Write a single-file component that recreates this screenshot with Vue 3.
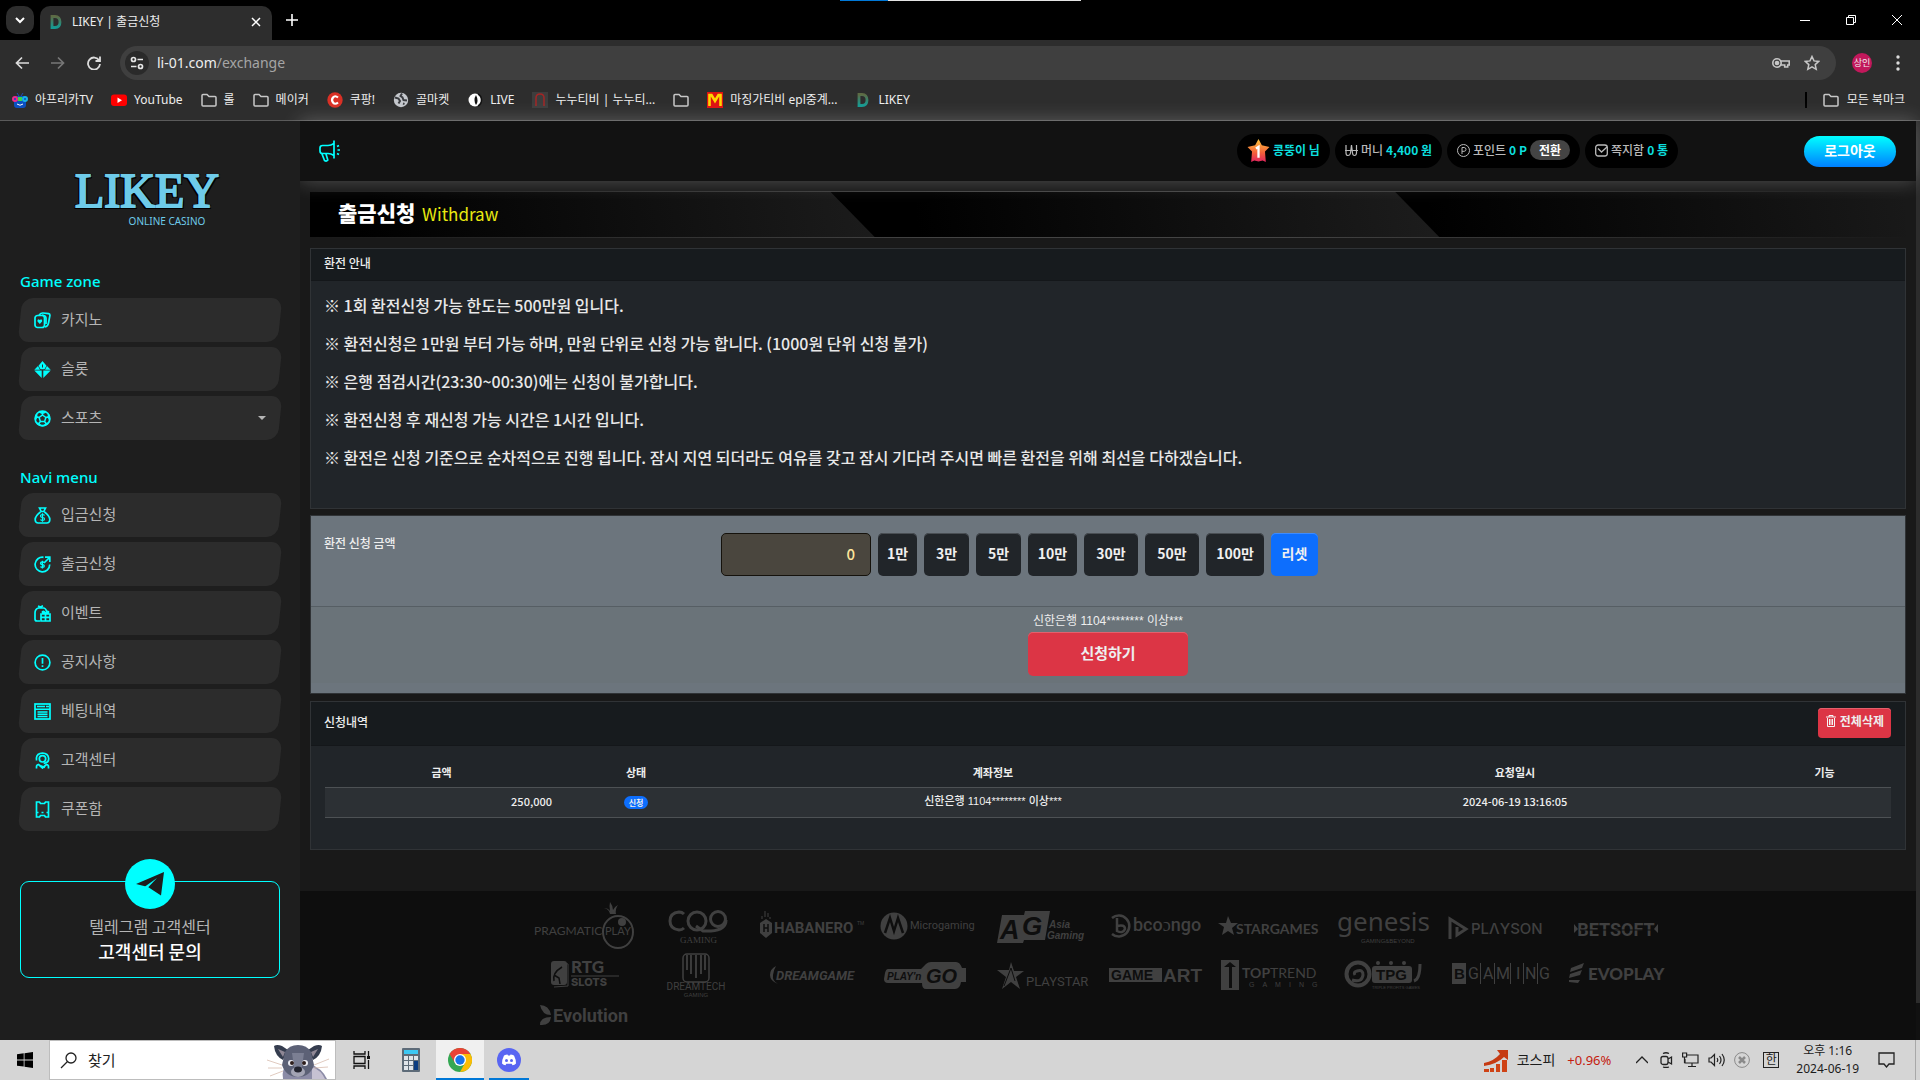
<script setup>
import { ref } from 'vue'

const amount = ref('0')

const bookmarks = [
  { label: '아프리카TV', icon: 'afreeca' },
  { label: 'YouTube', icon: 'youtube' },
  { label: '롤', icon: 'folder' },
  { label: '메이커', icon: 'folder' },
  { label: '쿠팡!', icon: 'coupang' },
  { label: '골마켓', icon: 'globe' },
  { label: 'LIVE', icon: 'live' },
  { label: '누누티비 | 누누티...', icon: 'nunu' },
  { label: '', icon: 'folder' },
  { label: '마징가티비 epl중계...', icon: 'mazinga' },
  { label: 'LIKEY', icon: 'likey' },
]

const bookmarkIcons = {
  afreeca: '<path d="M5 1l2 3M11 1L9 4" stroke="#1d4fb8" stroke-width="1"/><rect x="2" y="4" width="12" height="12" rx="3" fill="#0b4fc0"/><circle cx="3" cy="7" r="2" fill="none" stroke="#ef2a8a" stroke-width="2"/><circle cx="13" cy="7" r="2" fill="none" stroke="#18b4e8" stroke-width="2"/><rect x="6" y="5" width="4" height="4" fill="#3bd44a"/><path d="M5 12q3 2.500 6 0" fill="none" stroke="#fff"/>',
  youtube: '<rect x="0" y="2.500" width="16" height="11.500" rx="3" fill="#f00"/><path d="M6.500 5.500v5.500l4.500-2.750z" fill="#fff"/>',
  folder: '<path d="M1 12.500V3.500q0-1 1-1h4l2 2h6q1 0 1 1v7.500q0 1-1 1H2q-1 0-1-1z" fill="none" stroke="#c7c7c7" stroke-width="1.500"/>',
  coupang: '<circle cx="8" cy="8" r="7.700" fill="#d93025"/><path d="M11 5.500q-3-2.500-5 0t0 5q2 2.500 5 0" fill="none" stroke="#fff" stroke-width="2.200"/>',
  globe: '<circle cx="8" cy="8" r="7.200" fill="#c4c7cc"/><path d="M2 5.500l3.500 1L7 9l-1.500 2.500M9 1.500L7.500 4l2 1.500 1 2.500 3.500.5M10 11.500l1.500.5" fill="none" stroke="#3a3c40" stroke-width="2"/>',
  live: '<circle cx="8" cy="8" r="6.500" fill="#fff"/><path d="M9 3q-3 5 0 10 3-4 0-10z" fill="#111"/><path d="M11 2q3.500 2 3.500 6t-3.500 6" fill="none" stroke="#111" stroke-width="1.500"/>',
  nunu: '<rect width="16" height="16" fill="#3d3d3d"/><path d="M4 14V6q0-4 4-4t4 4v8" fill="none" stroke="#a32626" stroke-width="1.500"/>',
  mazinga: '<rect width="16" height="16" fill="#d11"/><path d="M2.500 14V3h2L8 9l3.500-6h2v11" fill="none" stroke="#ffd500" stroke-width="2.600"/>',
  likey: '<path d="M4 2.500v11h3q5 0 5-5.500t-5-5.500z" fill="none" stroke="url(#dg)" stroke-width="2.800"/>',
}

const gameMenu = [
  { label: '카지노', icon: 'cards' },
  { label: '슬롯', icon: 'gem' },
  { label: '스포츠', icon: 'ball', caret: true },
]

const naviMenu = [
  { label: '입금신청', icon: 'moneybag' },
  { label: '출금신청', icon: 'cashout' },
  { label: '이벤트', icon: 'event' },
  { label: '공지사항', icon: 'notice' },
  { label: '베팅내역', icon: 'history' },
  { label: '고객센터', icon: 'support' },
  { label: '쿠폰함', icon: 'coupon' },
]

const menuIcons = {
  cards: '<rect x="1" y="3.500" width="9.500" height="12" rx="2.500"/><path d="M5 3Q7 .8 9 1l5.500.7q1.700.4 1.400 2L14.500 11q-.5 3.500-3.500 4M8 3q4 .5 4 3v6"/><path d="M5.800 12L3.500 9.500q-.5-2 1-2.300l1.300.8 1.300-.8q1.500.3 1 2.300z" fill="#0ff" stroke="none"/>',
  gem: '<path d="M8.500 0l4 4.700-2 3.500h-4l-2-3.500zM4 5l2 3.800H.3zM13 5l3.700 3.800H11zM.3 9.600h7.400V17zM16.700 9.600H9.300V17z" fill="#0ff" stroke="none"/><path d="M8.500 3.500v3" stroke="#2c2c2c" stroke-width="1"/>',
  ball: '<circle cx="8.500" cy="8.500" r="7.400"/><path d="M8.500 5l3.400 2.500-1.300 4H6.400l-1.300-4zM8.500 1v4M12 7.500l4-1.300M10.500 11.500l2.800 3.500M6.400 11.500L3.700 15M5 7.500L1.200 6.200M5.500 2L8.500 3.500l3-1.500M14.500 4v3.500l1.200 2.500M14 13l-4 2.500H7L3 13M1.300 10l1.300-2.500V4" stroke-width="1.500"/>',
  moneybag: '<path d="M5.500 1h6l-1.700 3.500H7.200zM6.500 5Q1 9 1.200 13q.3 3 3 3h8.600q2.700 0 3-3Q16 9 10.500 5"/><path d="M10.500 8.500q-.5-1-2-1-2 0-2 1.500t2 1.500 2 1.500-2 1.500q-1.500 0-2-1M8.500 6.200v8.600" stroke-width="1.200"/>',
  cashout: '<path d="M9.500 1.300a7.300 7.300 0 1 0 6.200 7.200M10 7l5.500-5.500M11 1.200h4.800V6"/><path d="M10.300 6.800q-.4-1-1.900-1-1.900 0-1.900 1.400t1.900 1.400 1.900 1.400-1.900 1.400q-1.500 0-1.900-1M8.400 4.700v7.900" stroke-width="1.300"/>',
  event: '<path d="M6 16H3q-2 0-2-2V8q0-4 3.500-5h5q2 0 3 3M4 1l2.500 1L9 .8M7 9h9v7H7zM7 12.300h9M11.500 9v7M11.500 9q-3.500-.8-3-2.300 1.800-1.200 3 2.300 1.200-3.500 3-2.300.5 1.500-3 2.300"/>',
  notice: '<circle cx="8.500" cy="8.500" r="7.400"/><path d="M8.500 4v5.800M8.500 11.200v1.700"/>',
  history: '<rect x="1" y="1" width="15" height="15"/><path d="M1 6.200h15M3 3.600h8M12 3.500h3M3.500 9h10M3.500 11.300h10M3.500 13.500h10" stroke-width="1.500"/>',
  support: '<path d="M2.300 6.500q.5-5.300 6.200-5.300t6.200 5.300q0 4.500-5 4.800M2.500 8.500V6"/><circle cx="8.500" cy="6.800" r="3.200"/><path d="M2.500 16.500v-1.800q0-2 2-2.200l4 3.500 4-3.500q2 .2 2 2.200v1.800M6 13.500l5 2"/>',
  coupon: '<path d="M2.500 1h3l1 1.500h4l1-1.500h3v15h-3l-1-1.500h-4l-1 1.500h-3zM2.500 11.500h2M7.500 11.500h2M12.500 11.500h2"/>',
}

const presets = ['1만', '3만', '5만', '10만', '30만', '50만', '100만']

const notices = [
  '※ 1회 환전신청 가능 한도는 500만원 입니다.',
  '※ 환전신청은 1만원 부터 가능 하며, 만원 단위로 신청 가능 합니다. (1000원 단위 신청 불가)',
  '※ 은행 점검시간(23:30~00:30)에는 신청이 불가합니다.',
  '※ 환전신청 후 재신청 가능 시간은 1시간 입니다.',
  '※ 환전은 신청 기준으로 순차적으로 진행 됩니다. 잠시 지연 되더라도 여유를 갖고 잠시 기다려 주시면 빠른 환전을 위해 최선을 다하겠습니다.',
]

const requests = [
  { amount: '250,000', status: '신청', account: '신한은행 1104******** 이상***', time: '2024-06-19 13:16:05' },
]
</script>

<template>
  <div class="desktop">
    <svg class="defs" width="0" height="0" aria-hidden="true">
      <defs>
        <linearGradient id="dg" x1="0" y1="0" x2="0" y2="1">
          <stop offset="0" stop-color="#5d6b45" />
          <stop offset="1" stop-color="#159a92" />
        </linearGradient>
      </defs>
    </svg>

    <header class="browser">
      <div class="load-line"></div>
      <div class="tabs">
        <button class="tab-search" aria-label="탭 검색">
          <svg width="10" height="10" viewBox="0 0 10 10" fill="none" stroke="#fff" stroke-width="2"><path d="M1 3l4 4 4-4" /></svg>
        </button>
        <div class="tab">
          <svg width="16" height="16" viewBox="0 0 16 16" v-html="bookmarkIcons.likey"></svg>
          <span class="tab-title">LIKEY | 출금신청</span>
          <button class="bare" aria-label="탭 닫기">
            <svg width="10" height="10" viewBox="0 0 10 10" stroke="#fff" stroke-width="1.500"><path d="M1 1l8 8M9 1L1 9" /></svg>
          </button>
        </div>
        <button class="bare new-tab" aria-label="새 탭">
          <svg width="12" height="12" viewBox="0 0 12 12" stroke="#fff" stroke-width="1.600"><path d="M6 0v12M0 6h12" /></svg>
        </button>
        <div class="window-buttons">
          <button class="bare" aria-label="최소화"><svg width="10" height="10" viewBox="0 0 10 10" stroke="#fff"><path d="M0 5.500h10" /></svg></button>
          <button class="bare" aria-label="이전 크기로"><svg width="10" height="10" viewBox="0 0 10 10" fill="none" stroke="#fff"><path d="M.5 2.500h7v7h-7zM2.500 2.500v-2h7v7h-2" /></svg></button>
          <button class="bare" aria-label="닫기"><svg width="10" height="10" viewBox="0 0 10 10" stroke="#fff"><path d="M0 0l10 10M10 0L0 10" /></svg></button>
        </div>
      </div>

      <div class="toolbar">
        <button class="bare" aria-label="뒤로"><svg width="14" height="14" viewBox="0 0 14 14" fill="none" stroke="#dcdcdc" stroke-width="1.700"><path d="M14 7H2M7 1.500L1.500 7 7 12.500" /></svg></button>
        <button class="bare" aria-label="앞으로"><svg width="14" height="14" viewBox="0 0 14 14" fill="none" stroke="#777" stroke-width="1.700"><path d="M0 7h12M7 1.500L12.500 7 7 12.500" /></svg></button>
        <button class="bare" aria-label="새로고침"><svg width="14" height="14" viewBox="0 0 14 14" fill="none" stroke="#dcdcdc" stroke-width="1.800"><path d="M12.200 4.500A6 6 0 1 0 13 8M13 .5V5H8.500" /></svg></button>
        <div class="address">
          <span class="site-info">
            <svg width="14" height="14" viewBox="0 0 14 14" fill="none" stroke="#e6e6e6" stroke-width="1.700"><circle cx="3.500" cy="3.500" r="2" /><path d="M7.500 3.500H13M1 10.500h5.500" /><circle cx="10.500" cy="10.500" r="2" /></svg>
          </span>
          <span class="url">li-01.com<span class="path">/exchange</span></span>
          <svg width="18" height="12" viewBox="0 0 18 12" fill="none" stroke="#c7c7c7" stroke-width="1.600"><circle cx="5" cy="6" r="4.200" /><circle cx="5" cy="6" r="1.500" fill="#c7c7c7" /><path d="M9 4h8.200v4h-1.500v2h-3V8H9" /></svg>
          <svg width="16" height="16" viewBox="0 0 16 16" fill="none" stroke="#c7c7c7" stroke-width="1.500"><path d="M8 1.500l2 4.400 4.800.5-3.600 3.200 1 4.700L8 11.900l-4.200 2.400 1-4.700L1.200 6.400 6 5.900z" /></svg>
        </div>
        <span class="avatar">상인</span>
        <button class="bare menu-dots" aria-label="메뉴"><svg width="4" height="16" viewBox="0 0 4 16" fill="#dcdcdc"><circle cx="2" cy="2" r="1.700" /><circle cx="2" cy="8" r="1.700" /><circle cx="2" cy="14" r="1.700" /></svg></button>
      </div>

      <nav class="bookmarks" aria-label="북마크">
        <a v-for="(b, i) in bookmarks" :key="i" href="#" class="bookmark">
          <svg width="16" height="16" viewBox="0 0 16 16" v-html="bookmarkIcons[b.icon]"></svg>
          <span v-if="b.label">{{ b.label }}</span>
        </a>
        <a href="#" class="bookmark all-bookmarks">
          <svg width="16" height="16" viewBox="0 0 16 16" v-html="bookmarkIcons.folder"></svg>
          <span>모든 북마크</span>
        </a>
      </nav>
    </header>

    <div class="site">
      <aside class="sidebar">
        <div class="brand">
          <div class="brand-name">LIKEY</div>
          <div class="brand-sub">ONLINE CASINO</div>
        </div>

        <h2 class="menu-title">Game zone</h2>
        <nav class="menu">
          <a v-for="m in gameMenu" :key="m.label" href="#" class="menu-item">
            <svg width="17" height="17" viewBox="0 0 17 17" class="menu-icon" v-html="menuIcons[m.icon]"></svg>
            <span>{{ m.label }}</span>
            <svg v-if="m.caret" class="caret" width="8" height="4" viewBox="0 0 8 4"><path d="M0 0h8L4 4z" fill="#b5b5b5" /></svg>
          </a>
        </nav>

        <h2 class="menu-title second">Navi menu</h2>
        <nav class="menu">
          <a v-for="m in naviMenu" :key="m.label" href="#" class="menu-item">
            <svg width="17" height="17" viewBox="0 0 17 17" class="menu-icon" v-html="menuIcons[m.icon]"></svg>
            <span>{{ m.label }}</span>
          </a>
        </nav>

        <a href="#" class="telegram">
          <span class="telegram-badge">
            <svg width="28" height="24" viewBox="0 0 28 24"><path d="M0 12L28 0l-3 23.500-13-8.500z" fill="#1e1e1e" /><path d="M21 6L9 14.500l3 4.500v-3.500z" fill="#0ff" /></svg>
          </span>
          <span class="telegram-sub">텔레그램 고객센터</span>
          <strong class="telegram-main">고객센터 문의</strong>
        </a>
      </aside>

      <main class="main">
        <header class="topbar">
          <svg class="horn" width="22" height="22" viewBox="0 0 22 22" fill="none" stroke="#0ff" stroke-width="1.700"><path d="M15 .5v18M15 3.500q-3 2-6 2H3.500Q1 5.500 1 8v3q0 2.500 2.500 2.500H9q3 0 6 2M3 14l2.500 6.500q2 1.300 3.300-.5L7 14" /><path d="M18 6.500l2-1M18.500 10H21M18 13.500l2 1" /></svg>
          <div class="pills">
            <span class="pill">
              <svg width="23" height="23" viewBox="0 0 22 22"><defs><linearGradient id="sg" x1="0" y1="0" x2="0" y2="1"><stop offset="0" stop-color="#ffc83d" /><stop offset=".6" stop-color="#f4603a" /><stop offset="1" stop-color="#e0245e" /></linearGradient></defs><path d="M11 0l3.200 6 7.300 1.600-4.300 4.400.8 10-3-1.500-4 1-4-1L4 22l.8-10L.5 7.600 7.800 6z" fill="url(#sg)" /><path d="M8.500 9L11 7.500V18" fill="none" stroke="#fff" stroke-width="2.200" /></svg>
              <b>콩뚱이 님</b>
            </span>
            <span class="pill">
              <svg width="13" height="13" viewBox="0 0 13 13" fill="none" stroke="#b9b9b9" stroke-width="1.200"><path d="M1 1v8q0 2.500 2 2.500T5.500 9l1-8 1 8q.2 2.500 2 2.500t2-2.500V1M0 6.500h13" /></svg>
              <span>머니</span> <b>4,400 원</b>
            </span>
            <span class="pill">
              <svg width="13" height="13" viewBox="0 0 13 13" fill="none" stroke="#b9b9b9"><circle cx="6.500" cy="6.500" r="6" /><path d="M5 10V3.500h2.200q1.800.2 1.800 1.900T7.200 7.300H5" /></svg>
              <span>포인트</span> <b>0 P</b>
              <button class="convert">전환</button>
            </span>
            <span class="pill">
              <svg width="13" height="13" viewBox="0 0 13 13" fill="none" stroke="#b9b9b9" stroke-width="1.300"><rect x=".7" y="1" width="11.600" height="11" rx="2.500" /><path d="M3 4.500l3.500 3.500L12 3" /></svg>
              <span>쪽지함</span> <b>0 통</b>
            </span>
          </div>
          <button class="logout">로그아웃</button>
        </header>

        <div class="content">
          <div class="banner">
            <div class="facet last"></div>
            <div class="facet middle"></div>
            <div class="facet first"></div>
            <h1 class="banner-title">출금신청 <span>Withdraw</span></h1>
          </div>

          <section class="card">
            <h2 class="card-head">환전 안내</h2>
            <div class="notice">
              <p v-for="n in notices" :key="n">{{ n }}</p>
            </div>
          </section>

          <form class="card request" @submit.prevent>
            <div class="amount-row">
              <label for="amount">환전 신청 금액</label>
              <div class="amount-tools">
                <input id="amount" v-model="amount" type="text" />
                <button v-for="p in presets" :key="p" type="button" class="preset">{{ p }}</button>
                <button type="button" class="preset reset">리셋</button>
              </div>
            </div>
            <div class="submit-row">
              <span class="account">신한은행 1104******** 이상***</span>
              <button type="submit" class="submit">신청하기</button>
            </div>
          </form>

          <section class="card log">
            <div class="card-head tall">
              <h2>신청내역</h2>
              <button class="delete-all">
                <svg width="10" height="12" viewBox="0 0 10 12" fill="none" stroke="#f5f5f5"><path d="M0 2h10M3 2V.5h4V2M1.500 3v8.500h7V3M3.500 4v6M5 4v6M6.500 4v6" /></svg>
                전체삭제
              </button>
            </div>
            <div class="table-wrap">
              <table>
                <colgroup><col class="c-amount" /><col class="c-status" /><col /><col class="c-time" /><col class="c-action" /></colgroup>
                <thead>
                  <tr><th>금액</th><th>상태</th><th>계좌정보</th><th>요청일시</th><th>기능</th></tr>
                </thead>
                <tbody>
                  <tr v-for="r in requests" :key="r.time">
                    <td class="money">{{ r.amount }}</td>
                    <td><span class="status">{{ r.status }}</span></td>
                    <td class="account">{{ r.account }}</td>
                    <td>{{ r.time }}</td>
                    <td></td>
                  </tr>
                </tbody>
              </table>
            </div>
          </section>
        </div>

        <footer class="partners">
          <svg viewBox="0 0 114 48" class="logo"><text x="4" y="33" font-size="12" font-family="Lato">PRAGMATIC</text><ellipse cx="88" cy="30" rx="15" ry="16" fill="#0e0e0e" stroke="#404040" stroke-width="2" /><text x="75" y="33" font-size="11" font-family="Lato">PLAY</text><circle cx="92" cy="20" r="4" /><path d="M80 12q-1-5-6-6 4 0 6 3-1-5 0-9 3 4 3 8 1-3 5-5-3 4-2 9z" /></svg>
          <svg viewBox="14 0 114 48" class="logo"><g fill="none" stroke="#404040" stroke-width="3"><path d="M54 12q-2-2-5-2-9 1-9 9t9 9q3 0 5-2" /><circle cx="67" cy="19" r="9" /><path d="M66 24l7 5h8q15-1 15-11" /><circle cx="88" cy="17" r="7.500" /></g><text x="50" y="41" font-size="9" font-family="Liberation Serif">GAMING</text></svg>
          <svg viewBox="0 0 114 48" class="logo"><path d="M2 21l6-4 6 4v10l-6 5-6-5z" /><path d="M6 22v8M10 22v8M6 26h4" stroke="#0e0e0e" stroke-width="1.500" /><path d="M4 17v-3M7 15V9M10 15v-4M12 17v-2" stroke="#404040" /><text x="16" y="31" font-size="15" font-weight="700" font-family="Roboto">HABANERO</text><text x="99" y="23" font-size="5">TM</text></svg>
          <svg viewBox="0 0 114 48" class="logo"><circle cx="22" cy="24" r="13.500" /><path d="M13 31l5-15 4 13 4-13 5 15" fill="none" stroke="#0e0e0e" stroke-width="2.500" /><text x="38" y="27" font-size="11" font-family="Roboto">Microgaming</text></svg>
          <svg viewBox="0 0 114 48" class="logo"><path d="M16 13h22l1-4h25l-5 29H38l-1 3H11z" /><text x="14" y="37" font-size="27" font-weight="700" font-style="italic" fill="#0e0e0e">A</text><text x="36" y="33" font-size="26" font-weight="700" font-style="italic" fill="#0e0e0e">G</text><text x="63" y="26" font-size="10" font-weight="700" font-style="italic">Asia</text><text x="61" y="37" font-size="10" font-weight="700" font-style="italic">Gaming</text></svg>
          <svg viewBox="0 0 114 48" class="logo"><path d="M12 16a10.500 10.500 0 1 1 0 16" fill="none" stroke="#404040" stroke-width="2.500" /><path d="M17 16v13q6 3 8-2 0-5-8-3" fill="none" stroke="#404040" stroke-width="2.500" /><text x="33" y="29" font-size="18" font-family="Roboto" font-weight="500">bcoɔngo</text></svg>
          <svg viewBox="0 0 114 48" class="logo"><path d="M14 14l3 7h7l-6 5 2 7-6-4-6 4 2-8-6-4h8z" /><text x="22" y="32" font-size="14" font-weight="700" font-family="Lato">STARGAMES</text></svg>
          <svg viewBox="0 0 114 48" class="logo"><text x="9" y="29" font-size="26" font-family="Noto Sans">genesis</text><text x="33" y="41" font-size="6">GAMING&amp;BEYOND</text></svg>
          <svg viewBox="0 0 114 48" class="logo"><path d="M8 37V17l16 10-9 6v-8" fill="none" stroke="#404040" stroke-width="3" /><text x="29" y="32" font-size="15" font-family="Inter" font-weight="500">PLΛYSON</text></svg>
          <svg viewBox="0 0 114 48" class="logo"><path d="M18 22v9l4-4zM102 22v9l-4-4z" /><text x="60" y="34" font-size="18" text-anchor="middle" font-family="Roboto" font-weight="700">BETSOFT</text><path d="M24 28h72" stroke="#0e0e0e" /></svg>

          <svg viewBox="0 0 114 48" class="logo"><rect x="21" y="11" width="16" height="24" rx="3" /><path d="M35 13l3 1v22l-14 1" fill="none" stroke="#404040" /><path d="M24 31q-2-8 8-14M24 25l5 3 1 6" fill="none" stroke="#0e0e0e" stroke-width="1.500" /><text x="41" y="23" font-size="17" font-weight="900" font-family="Lato">RTG</text><path d="M41 26h48" stroke="#404040" /><text x="41" y="36" font-size="11" font-weight="800" font-family="Inter">SLOTS</text></svg>
          <svg viewBox="2 0 114 48" class="logo"><rect x="41" y="4" width="26" height="28" rx="4" fill="none" stroke="#404040" stroke-width="1.500" /><path d="M45 5v15M49 5v19M54 5v23M59 5v19M63 5v15" stroke="#404040" stroke-width="1.800" /><text x="54" y="40" font-size="10" text-anchor="middle" font-family="Roboto">DREAMTECH</text><text x="54" y="47" font-size="6" text-anchor="middle">GAMING</text></svg>
          <svg viewBox="0 0 114 48" class="logo"><path d="M18 16q-6 3-6 9t8 9q-6-3-5-9t3-9z" /><text x="18" y="30" font-size="13" font-weight="700" font-style="italic" font-family="Roboto">DREAMGAME</text></svg>
          <svg viewBox="-2 0 114 48" class="logo"><path d="M14 19h33l5-5q2-2 5-2h25q4 0 6 6h4v14h-5q-1 7-6 7H52q-4 0-4-6H14q-4 0-4-4l1-6q1-4 3-4z" /><text x="13" y="30" font-size="10" font-style="italic" font-weight="700" fill="#0e0e0e">PLAY'n</text><text x="52" y="33" font-size="20" font-style="italic" font-weight="700" fill="#0e0e0e">GO</text></svg>
          <svg viewBox="0 0 114 48" class="logo"><path d="M25 12l3 9h10l-8 6 4 12-9-7-9 7 4-12-9-7h12z" /><path d="M18 36l7-18 4 13" stroke="#0e0e0e" fill="none" /><text x="40" y="36" font-size="13" font-family="Roboto">PLAYSTAR</text></svg>
          <svg viewBox="0 0 114 48" class="logo"><path d="M9 18h53v14H9z" /><text x="11" y="30" font-size="14" font-weight="700" fill="#0e0e0e">GAME</text><text x="63" y="32" font-size="19" font-weight="700">ART</text></svg>
          <svg viewBox="0 0 114 48" class="logo"><path d="M7 10h18v30H7z" /><path d="M10 17l6-5 6 5h-4v21h-3V17z" fill="#0e0e0e" /><text x="28" y="28" font-size="14" font-family="Lato"><tspan font-weight="700">TOP</tspan>TREND</text><text x="35" y="37" font-size="7" letter-spacing="8">GAMING</text></svg>
          <svg viewBox="-2 0 114 48" class="logo"><circle cx="28" cy="24" r="11.500" fill="none" stroke="#404040" stroke-width="4" /><path d="M22 30q10 3 11-5 0-6-6-4-4 1-2 4" fill="none" stroke="#404040" stroke-width="3" /><rect x="42" y="16" width="40" height="17" rx="3" /><text x="46" y="30" font-size="15" font-weight="700" fill="#0e0e0e">TPG</text><circle cx="48" cy="13" r="2" /><circle cx="61" cy="13" r="2" /><circle cx="74" cy="13" r="2" /><path d="M84 31q6-2 6-17" fill="none" stroke="#404040" stroke-width="3" /><text x="42" y="39" font-size="4">TRIPLE PROFITS GAMES</text></svg>
          <svg viewBox="0 0 114 48" class="logo"><path d="M10 13h14v21H10z" /><text x="12" y="29" font-size="15" font-weight="700" fill="#0e0e0e">B</text><g font-size="16" font-family="Roboto"><text x="26" y="29">G</text><text x="41" y="29">A</text><text x="54" y="29">M</text><text x="74" y="29">I</text><text x="83" y="29">N</text><text x="97" y="29">G</text></g><path d="M38.500 13v21M52.500 13v21M68.500 13v21M81.500 13v21M95.500 13v21" stroke="#404040" /></svg>
          <svg viewBox="0 0 114 48" class="logo"><path d="M15 18l13-5-2 5-12 4zM14 24l12-4-2 5-11 3zM13 30h11l-2 3-9-1z" /><text x="32" y="30" font-size="17" font-weight="900" font-family="Lato">EVOPLAY</text></svg>

          <svg viewBox="0 0 114 48" class="logo"><path d="M10 7q9 0 11 10Q12 17 10 7zM10 27q0-8 11-8-1 9-11 8z" /><text x="23" y="24" font-size="18" font-weight="700" font-family="Roboto">Evolution</text></svg>
        </footer>
      </main>
      <div class="scrollbar"><div class="thumb"></div></div>
    </div>

    <footer class="taskbar">
      <button class="bare start" aria-label="시작"><svg width="16" height="16" viewBox="0 0 16 16"><path d="M0 2.300l6.700-1v6.200H0zM7.500 1.200L16 0v7.500H7.500zM0 8.400h6.700v6.200L0 13.700zM7.500 8.400H16V16l-8.500-1.200z" /></svg></button>
      <label class="search">
        <svg width="17" height="17" viewBox="0 0 17 17" fill="none" stroke="#222" stroke-width="1.300"><circle cx="11" cy="6" r="5" /><path d="M7.500 9.500L1 16" /></svg>
        <input type="text" value="찾기" aria-label="찾기" />
        <svg class="mascot" width="64" height="36" viewBox="0 0 64 36">
          <path d="M17 36q-2-10 5-15h22q12 4 17 15z" fill="#8b8ba6" /><path d="M46 24q9 3 13 12H46z" fill="#c6c1d2" />
          <path d="M8 3q3-2 8 0l6 4-5 10Q9 13 8 3zM56 3q-3-2-8 0l-6 4 5 10q8-4 9-14z" fill="#343c4e" /><path d="M12 6l7 3-2 5zM52 6l-7 3 2 5z" fill="#8f8795" />
          <path d="M19 9q4-7 13-7t13 7l3 13q-4 12-16 12T16 22z" fill="#5c6176" /><path d="M26 10h12l-2 14h-8z" fill="#7b7f93" />
          <circle cx="25" cy="20" r="3" fill="#e9e9ef" /><circle cx="39" cy="20" r="3" fill="#e9e9ef" /><circle cx="26" cy="20" r="2" fill="#2c1d1a" /><circle cx="38" cy="20" r="2" fill="#2c1d1a" />
          <ellipse cx="32" cy="29" rx="7" ry="5" fill="#a3a4b4" /><ellipse cx="32" cy="26.500" rx="4" ry="3" fill="#22242e" />
          <path d="M16 22L1 17M16 25L2 25M17 28L4 33M48 22l15-6M48 25l14-1" stroke="#d8bcae" stroke-width=".8" />
        </svg>
      </label>
      <button class="bare task" aria-label="작업 보기"><svg width="17" height="18" viewBox="0 0 17 18" fill="none" stroke="#111" stroke-width="1.300"><path d="M1 0v3h11V0M1 18v-3h11v3M1 5.500h11v7H1zM15.500 0v5M15.500 9v9" /><rect x="14" y="5" width="3" height="3" fill="#111" stroke="none" /></svg></button>
      <button class="bare task" aria-label="계산기"><svg width="18" height="24" viewBox="0 0 18 24"><rect width="18" height="24" rx="1" fill="#5d6b78" /><rect x="2" y="2" width="14" height="4" fill="#3cc8f4" /><g fill="#dfe5ea"><path d="M2 8h4v4H2zM7 8h4v4H7zM12 8h4v4h-4zM2 13h4v4H2zM7 13h4v4H7zM2 18h4v4H2zM7 18h4v4H7z" /></g><path d="M12 13h4v9h-4z" fill="#0b3d82" /></svg></button>
      <button class="bare task active" aria-label="Chrome"><svg width="24" height="24" viewBox="0 0 24 24"><circle cx="12" cy="12" r="12" fill="#34a853" /><path d="M1.600 6A12 12 0 0 1 22.400 6H12L7 15z" fill="#ea4335" /><path d="M22.400 6A12 12 0 0 1 12 24l5-9-5-9z" fill="#fbbc05" /><circle cx="12" cy="12" r="6" fill="#fff" /><circle cx="12" cy="12" r="4.700" fill="#1a73e8" /></svg></button>
      <button class="bare task running" aria-label="Discord"><svg width="24" height="24" viewBox="0 0 24 24"><circle cx="12" cy="12" r="12" fill="#5865f2" /><path d="M7 7.500q2-1 3.500-1l.5 1h2l.5-1q1.500 0 3.500 1 2 4 2 8-1.500 1.500-3.500 1.800l-.8-1.500H9.300l-.8 1.500Q6.500 17 5 15.500q0-4 2-8z" fill="#fff" /><circle cx="9.500" cy="12.500" r="1.500" fill="#5865f2" /><circle cx="14.500" cy="12.500" r="1.500" fill="#5865f2" /></svg></button>

      <div class="tray">
        <svg width="24" height="24" viewBox="0 0 24 24"><path d="M0 15q10-2 16-9l-3-4h11v10l-4-3Q13 16 0 18z" fill="#c63a12" /><path d="M0 21h5v3H0zM6 20h4v4H6zM12 16h4v8h-4zM18 12h5v12h-5z" fill="#cf4316" /></svg>
        <span class="stock">코스피</span><span class="gain">+0.96%</span>
        <svg width="12" height="8" viewBox="0 0 12 8" fill="none" stroke="#222" stroke-width="1.300"><path d="M0 7l6-6 6 6" /></svg>
        <svg class="camera" width="13" height="16" viewBox="0 0 13 16" fill="none" stroke="#222" stroke-width="1.300"><rect x="1" y="4.500" width="7" height="8" rx="2" /><path d="M8 7l3.500-2v7L8 10M3 1.500q3-1.500 6 0M3 15q3 1 6 0" /></svg>
        <svg width="17" height="16" viewBox="0 0 17 16" fill="none" stroke="#222" stroke-width="1.200"><path d="M5 3h11v8H3V7M10 11v3M6 14.500h8M.6 1h4v4h-4zM2.500 5v6" /></svg>
        <svg width="17" height="14" viewBox="0 0 17 14" fill="none" stroke="#222" stroke-width="1.200"><path d="M1 5v4h2l3.500 3.500v-11L3 5zM9 5q1.500 2 0 4M11.500 3q3 4 0 8M14 1q4.500 6 0 12" /></svg>
        <svg width="16" height="16" viewBox="0 0 16 16" fill="none" stroke="#8a8a8a"><circle cx="8" cy="8" r="7.400" /><path d="M5 5l6 6M11 5l-6 6" stroke-width="2.500" /></svg>
        <span class="ime">한</span>
        <div class="clock"><span>오후 1:16</span><span>2024-06-19</span></div>
        <svg width="17" height="16" viewBox="0 0 17 16" fill="none" stroke="#222" stroke-width="1.300"><path d="M1 1h15v11h-5l-2.500 3L6 12H1z" /></svg>
      </div>
    </footer>
  </div>
</template>

<style>
body {
  margin: 0;
  background: #0e0e0e;
}
</style>

<style scoped>
.desktop,
.desktop * {
  box-sizing: border-box;
}
.desktop {
  display: flex;
  flex-direction: column;
  min-height: 100vh;
  font-family: 'Noto Sans CJK KR', sans-serif;
  font-size: 12px;
  line-height: 16px;
  color: #eee;
}
.defs {
  position: absolute;
}
svg {
  flex: none;
  display: block;
}
a {
  color: inherit;
  text-decoration: none;
}
button {
  font: inherit;
  color: inherit;
  cursor: pointer;
}
h1,
h2,
p {
  margin: 0;
}
.bare {
  display: flex;
  padding: 0;
  border: 0;
  background: none;
}

/* browser frame */
.browser {
  position: relative;
  background: #2d2d2d;
  border-bottom: 1px solid #5a5a5a;
  font-family: 'Noto Sans', 'Noto Sans CJK KR', sans-serif;
}
.load-line {
  position: absolute;
  top: 0;
  left: 50%;
  width: 241px;
  height: 1px;
  margin-left: -120px;
  background: linear-gradient(90deg, #0078d7 48px, #e4e4e4 48px);
}
.tabs {
  display: flex;
  align-items: center;
  height: 40px;
  padding: 0 18px 0 6px;
  background: #000;
}
.tab-search {
  display: grid;
  place-items: center;
  width: 28px;
  height: 28px;
  padding: 0;
  border: 0;
  border-radius: 10px;
  background: #2d2d2d;
}
.tab {
  display: flex;
  align-items: center;
  align-self: flex-end;
  width: 232px;
  height: 34px;
  margin-left: 6px;
  padding: 0 11px 3px 8px;
  border-radius: 10px 10px 0 0;
  background: #2d2d2d;
}
.tab-title {
  flex: 1;
  margin-left: 8px;
}
.new-tab {
  margin-left: 14px;
}
.window-buttons {
  display: flex;
  gap: 36px;
  margin-left: auto;
}
.toolbar {
  display: flex;
  align-items: center;
  gap: 22px;
  height: 45px;
  padding: 0 20px 0 15px;
}
.address {
  display: flex;
  align-items: center;
  gap: 14px;
  flex: 1;
  height: 34px;
  margin-left: -3px;
  padding: 0 16px 0 5px;
  border-radius: 17px;
  background: #3f3f3f;
}
.site-info {
  display: grid;
  place-items: center;
  width: 24px;
  height: 24px;
  border-radius: 12px;
  background: #2a2a2a;
}
.url {
  flex: 1;
  margin-left: -6px;
  font-size: 14px;
  line-height: 20px;
}
.path {
  color: #a5a5a5;
}
.avatar {
  width: 20px;
  height: 20px;
  margin-left: -6px;
  border-radius: 10px;
  background: #c2185b;
  font-size: 9px;
  line-height: 19px;
  text-align: center;
  white-space: nowrap;
}
.menu-dots {
  margin-left: 2px;
}
.bookmarks {
  display: flex;
  align-items: center;
  gap: 18px;
  height: 35px;
  padding: 0 15px 6px 12px;
}
.bookmark {
  display: flex;
  align-items: center;
  gap: 7px;
  white-space: nowrap;
}
.all-bookmarks {
  gap: 8px;
  margin-left: auto;
  padding-left: 16px;
  border-left: 2px solid #000;
}

/* site */
.site {
  display: flex;
  flex: 1;
  background: #191919;
}
.sidebar {
  position: relative;
  z-index: 2;
  flex: none;
  width: 300px;
  padding: 45px 20px 0;
  background: #1e1e1e;
}
.brand {
  display: flex;
  flex-direction: column;
  align-items: center;
  height: 102px;
  padding-right: 6px;
  color: #6ecbe9;
}
.brand-name {
  font-family: 'Liberation Serif', serif;
  font-size: 48px;
  line-height: 50px;
  -webkit-text-stroke: 2px #6ecbe9;
  text-shadow: 2px 2px 0 #000, -2px -1px 0 #000, 2px -1px 0 #000, -2px 2px 0 #000;
}
.brand-sub {
  margin-left: 40px;
  font-family: 'Noto Sans', sans-serif;
  font-size: 10px;
  line-height: 10px;
}
.menu-title {
  padding: 3px 0 7px;
  font-family: 'Noto Sans', sans-serif;
  font-size: 15px;
  font-weight: 500;
  line-height: 20px;
  color: #0ff;
}
.menu-title.second {
  margin-top: 24px;
  padding-bottom: 6px;
}
.menu {
  display: flex;
  flex-direction: column;
  gap: 5px;
}
.menu-item {
  position: relative;
  display: flex;
  align-items: center;
  gap: 10px;
  height: 44px;
  padding: 0 14px;
  font-size: 15px;
  line-height: 20px;
  color: #b5b5b5;
}
.menu-item::before {
  content: '';
  position: absolute;
  inset: 0;
  border-radius: 11px;
  background: #2c2c2c;
  transform: skewX(-6deg);
}
.menu-item > * {
  position: relative;
}
.menu-item span {
  margin-top: -3px;
}
.menu-icon {
  fill: none;
  stroke: #0ff;
  stroke-width: 1.7;
}
.caret {
  margin-left: auto;
}
.telegram {
  position: relative;
  display: flex;
  flex-direction: column;
  align-items: center;
  height: 97px;
  margin-top: 50px;
  padding-top: 32px;
  border: 1px solid #0ff;
  border-radius: 9px;
}
.telegram-badge {
  position: absolute;
  top: -23px;
  display: grid;
  place-items: center;
  width: 50px;
  height: 50px;
  border-radius: 25px;
  background: #0ff;
}
.telegram-sub {
  font-size: 16px;
  line-height: 24px;
  color: #b5b5b5;
}
.telegram-main {
  font-size: 18px;
  font-weight: 500;
  line-height: 26px;
  color: #fff;
}

.main {
  display: flex;
  flex-direction: column;
  flex: 1;
  min-width: 0;
}
.topbar {
  position: relative;
  z-index: 1;
  display: flex;
  align-items: center;
  height: 60px;
  padding: 0 20px 0 19px;
  background: #121212;
  box-shadow: 0 0 20px rgba(255, 255, 255, 0.25);
}
.pills {
  display: flex;
  gap: 5px;
  margin: 0 126px 0 auto;
}
.pill {
  display: flex;
  align-items: center;
  gap: 3px;
  height: 34px;
  padding: 0 10px 2px;
  border-radius: 17px;
  background: #000;
  color: #b9b9b9;
  font-weight: 500;
  white-space: nowrap;
}
.pill b {
  font-weight: 700;
  color: #0cdede;
}
.convert {
  height: 20px;
  padding: 0 9px;
  border: 0;
  border-radius: 10px;
  background: #444;
  color: #fff;
  font-weight: 700;
  line-height: 18px;
}
.logout {
  width: 92px;
  height: 31px;
  padding: 0 0 3px;
  border: 0;
  border-radius: 16px;
  background: linear-gradient(#0ff, #0080ff);
  color: #fff;
  font-size: 14px;
  font-weight: 700;
}
.content {
  display: flex;
  flex-direction: column;
  gap: 6px;
  padding: 10px 10px 41px;
}
.banner {
  position: relative;
  height: 47px;
  margin-bottom: 4px;
  border: 1px solid;
  border-width: 1px 0;
  border-image: linear-gradient(90deg, #191919, #444 40%, #444 60%, #191919) 1;
}
.facet {
  position: absolute;
  inset: 0;
}
.last {
  background: linear-gradient(80deg, #000 70%, #191919);
}
.middle {
  background: linear-gradient(80deg, #000 38%, #1c1c1c 70%);
  clip-path: polygon(0 0, 68% 0, calc(68% + 44px) 100%, 0 100%);
}
.first {
  background: linear-gradient(80deg, #000 3%, #1c1c1c 36%);
  clip-path: polygon(0 0, calc(33% - 6px) 0, calc(33% + 38px) 100%, 0 100%);
}
.banner-title {
  position: relative;
  padding-left: 28px;
  font-size: 21px;
  font-weight: 900;
  line-height: 41px;
  color: #fff;
}
.banner-title span {
  margin-left: 2px;
  font-size: 17px;
  font-weight: 400;
  color: #eaea10;
}
.card {
  border: 1px solid #303336;
  background: #212529;
}
.card h2 {
  font-size: 12px;
  font-weight: 500;
}
.card-head {
  height: 32px;
  padding: 6px 13px;
  border-bottom: 1px solid #14171a;
  background: #171b1e;
}
.card-head.tall {
  display: flex;
  justify-content: space-between;
  height: 44px;
  padding: 6px 14px 6px 13px;
}
.log {
  margin-top: 1px;
}
.tall h2 {
  line-height: 28px;
}
.notice {
  display: flex;
  flex-direction: column;
  gap: 16px;
  padding: 13px 13px 40px;
  font-size: 16px;
  font-weight: 500;
  line-height: 22px;
  color: #e8e8e8;
}
.request {
  padding-bottom: 10px;
  background: #6c757d;
}
.amount-row {
  display: flex;
  height: 91px;
  padding: 17px 13px 0;
  border-bottom: 1px solid #565e64;
}
.amount-row label {
  flex: none;
  width: 25%;
  padding-top: 2px;
  font-weight: 500;
}
.amount-tools {
  display: grid;
  grid-template-columns: 150px 39px 45px 45px 49px 54px 54px 58px 47px;
  gap: 7px;
  height: 43px;
  margin-left: 5px;
}
.amount-tools input {
  min-width: 0;
  padding: 0 15px 2px;
  border: 1px solid #15120c;
  border-radius: 5px;
  background: #4a463e;
  color: #ffe69c;
  font: 500 15px 'Noto Sans CJK KR', sans-serif;
  text-align: right;
}
.preset {
  padding: 0 0 3px;
  border: 0;
  border-radius: 5px;
  background: #212529;
  box-shadow: inset 0 1px 0 #4a4f54;
  color: #f0f0f0;
  font-size: 14px;
  font-weight: 700;
}
.reset {
  background: #0d6efd;
  box-shadow: inset 0 1px 0 #3e8bfd;
}
.submit-row {
  display: flex;
  flex-direction: column;
  align-items: center;
  gap: 3px;
  padding: 6px 0 7px;
  background: #6a7379;
}
.account {
  font-family: 'Liberation Sans', 'Noto Sans CJK KR', sans-serif;
}
.submit {
  width: 160px;
  height: 44px;
  padding: 0 0 3px;
  border: 0;
  border-radius: 5px;
  background: #dc3545;
  box-shadow: inset 0 1px 0 #e4606c;
  font-size: 15px;
  font-weight: 700;
}
.delete-all {
  display: flex;
  align-items: center;
  gap: 4px;
  height: 30px;
  padding: 0 7px 4px 8px;
  border: 0;
  border-radius: 4px;
  background: #dc3545;
  box-shadow: inset 0 1px 0 #e4606c;
  font-weight: 700;
}
.table-wrap {
  padding: 11px 14px 31px 14px;
}
table {
  width: 100%;
  table-layout: fixed;
  border-collapse: collapse;
  font-size: 11px;
}
.c-amount {
  width: 233px;
}
.c-status {
  width: 156px;
}
.c-time {
  width: 486px;
}
.c-action {
  width: 133px;
}
th,
td {
  height: 30px;
  padding: 0 6px;
  border-bottom: 1px solid #4d5154;
  font-weight: 500;
  text-align: center;
}
th {
  font-weight: 700;
}
td {
  padding-bottom: 2px;
  background: #2c3034;
}
.money {
  text-align: right;
}
.status {
  display: inline-block;
  padding: 0 5px;
  border-radius: 7px;
  background: #0d6efd;
  font-size: 8px;
  font-weight: 700;
  line-height: 13px;
}

.partners {
  display: grid;
  grid-template-columns: repeat(10, 114px);
  grid-template-rows: 48px 48px 38px;
  justify-content: center;
  flex: 1;
  padding: 11px 16px 0 0;
  overflow: hidden;
  background: #0e0e0e;
}
.logo {
  width: 114px;
  height: 48px;
  fill: #404040;
  font-family: 'Liberation Sans', sans-serif;
}
.scrollbar {
  flex: none;
  width: 4px;
  background: #111;
}
.thumb {
  height: 96%;
  background: #2c2c2c;
}

/* taskbar */
.taskbar {
  display: flex;
  height: 40px;
  background: #d5d5d5;
  color: #1c1c1c;
}
.start {
  width: 49px;
  align-items: center;
  justify-content: center;
}
.search {
  display: flex;
  align-items: center;
  width: 287px;
  padding-left: 10px;
  border: 1px solid #bdbdbd;
  background: #fff;
}
.search input {
  flex: 1;
  min-width: 0;
  margin-left: 11px;
  padding: 0 0 2px;
  border: 0;
  outline: 0;
  background: none;
  color: #222;
  font: 15px 'Noto Sans CJK KR', sans-serif;
}
.mascot {
  align-self: flex-end;
  margin-right: 5px;
}
.task {
  width: 50px;
  align-items: center;
  justify-content: center;
}
.active {
  width: 48px;
  background: #f0f0f0;
  box-shadow: inset 0 -2px 0 #0078d7;
}
.running {
  width: 40px;
  margin-left: 5px;
  box-shadow: inset 0 -2px 0 #0078d7;
}
.tray {
  display: flex;
  align-items: center;
  gap: 9px;
  margin-left: auto;
  margin-right: 4px;
  padding-right: 20px;
  border-right: 1px solid #a8a8a8;
  font-family: 'Noto Sans', 'Noto Sans CJK KR', sans-serif;
}
.stock {
  margin-right: 3px;
  font-size: 14px;
}
.gain {
  margin-right: 16px;
  font-size: 13px;
  color: #c4200f;
}
.camera {
  margin-left: 3px;
}
.ime {
  width: 16px;
  height: 16px;
  margin-left: 4px;
  border: 1px solid #222;
  font-size: 12px;
  line-height: 14px;
  text-align: center;
}
.clock {
  display: flex;
  flex-direction: column;
  align-items: center;
  margin: 0 10px 0 8px;
  line-height: 18px;
}
</style>
